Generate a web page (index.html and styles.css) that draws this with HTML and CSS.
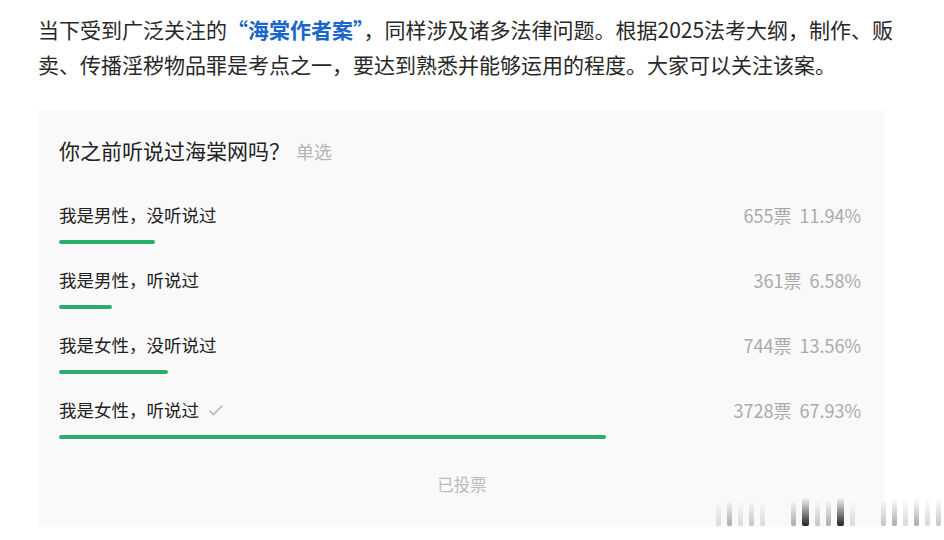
FILE: index.html
```html
<!DOCTYPE html>
<html lang="zh-CN">
<head>
<meta charset="utf-8">
<link rel="stylesheet" href="styles.css">
</head>
<body>
<div class="page">
  <p class="intro">当下受到广泛关注的<b class="hl">“海棠作者案”</b>，同样涉及诸多法律问题。根据2025法考大纲，制作、贩<br>卖、传播淫秽物品罪是考点之一，要达到熟悉并能够运用的程度。大家可以关注该案。</p>
  <div class="poll">
    <div class="title">你之前听说过海棠网吗？<span class="kind">单选</span></div>
    <div class="options">
      <div class="opt">
        <div class="row"><span class="label">我是男性，没听说过</span><span class="stat">655票&nbsp;&nbsp;11.94%</span></div>
        <div class="track"><div class="bar" style="width:11.94%"></div></div>
      </div>
      <div class="opt">
        <div class="row"><span class="label">我是男性，听说过</span><span class="stat">361票&nbsp;&nbsp;6.58%</span></div>
        <div class="track"><div class="bar" style="width:6.58%"></div></div>
      </div>
      <div class="opt">
        <div class="row"><span class="label">我是女性，没听说过</span><span class="stat">744票&nbsp;&nbsp;13.56%</span></div>
        <div class="track"><div class="bar" style="width:13.56%"></div></div>
      </div>
      <div class="opt">
        <div class="row"><span class="label">我是女性，听说过<svg class="check" width="16" height="12" viewBox="0 0 16 12"><path d="M1.5 6.5 L5.5 10.5 L14.5 1.5" fill="none" stroke="#b8b8b8" stroke-width="1.6"/></svg></span><span class="stat">3728票&nbsp;&nbsp;67.93%</span></div>
        <div class="track"><div class="bar" style="width:67.93%"></div></div>
      </div>
    </div>
    <div class="voted">已投票</div>
  </div>
  <div class="wm">
    <i class="s1"></i><i class="s2"></i><i class="s1"></i><i class="s3"></i><i class="s1"></i><i class="gap"></i>
    <i class="s2"></i><i class="s4"></i><i class="s3"></i><i class="s2"></i><i class="s4"></i><i class="s1"></i><i class="gap"></i>
    <i class="s3"></i><i class="s2"></i><i class="s1"></i><i class="s2"></i><i class="s1"></i><i class="s3"></i>
  </div>
</div>
</body>
</html>
```
FILE: styles.css
```css
html, body {
  margin: 0;
  padding: 0;
  background: #fff;
}
.page {
  position: relative;
  width: 944px;
  height: 540px;
  overflow: hidden;
  font-family: "Noto Sans CJK SC", "Noto Sans", sans-serif;
  color: #222;
}
.intro {
  margin: 0;
  padding: 12px 0 0 38px;
  font-size: 21px;
  line-height: 35px;
  color: #282828;
  white-space: nowrap;
}
.hl {
  color: #1b66c9;
  font-weight: 700;
}
.poll {
  margin: 28px 0 0 39px;
  width: 845px;
  box-sizing: border-box;
  background: #f9f9f9;
  padding: 26px 19px 31px 20px;
}
.title {
  font-size: 21px;
  line-height: 28px;
  color: #222;
  display: flex;
  align-items: baseline;
}
.kind {
  margin-left: 6px;
  font-size: 18px;
  color: #b5b5b5;
}
.options {
  margin-top: 38px;
  display: flex;
  flex-direction: column;
  gap: 24px;
}
.row {
  display: flex;
  justify-content: space-between;
  align-items: center;
  line-height: 24px;
  font-size: 17.5px;
}
.label {
  color: #222;
  display: flex;
  align-items: center;
}
.check {
  margin-left: 9px;
}
.stat {
  color: #aaa;
  margin-right: 4px;
  font-size: 18px;
}
.track {
  margin-top: 13px;
  height: 4px;
  width: 805px;
}
.bar {
  height: 4px;
  border-radius: 2px;
  background: #2bae6b;
}
.voted {
  margin-top: 33px;
  text-align: center;
  font-size: 16.5px;
  line-height: 24px;
  color: #bbb;
}
.wm {
  position: absolute;
  left: 716px;
  top: 498px;
  height: 28px;
  display: flex;
  gap: 6px;
  align-items: stretch;
}
.wm i {
  display: block;
  width: 5px;
  border-radius: 2px;
}
.wm .gap { width: 14px; }
.wm .s1 { background: linear-gradient(#fff, #d8d8d8); }
.wm .s2 { background: linear-gradient(#fff, #aaa); }
.wm .s3 { background: linear-gradient(#fff, #c4c4c4); }
.wm .s4 { background: linear-gradient(#f4f4f4, #222); width: 7px; }
```
